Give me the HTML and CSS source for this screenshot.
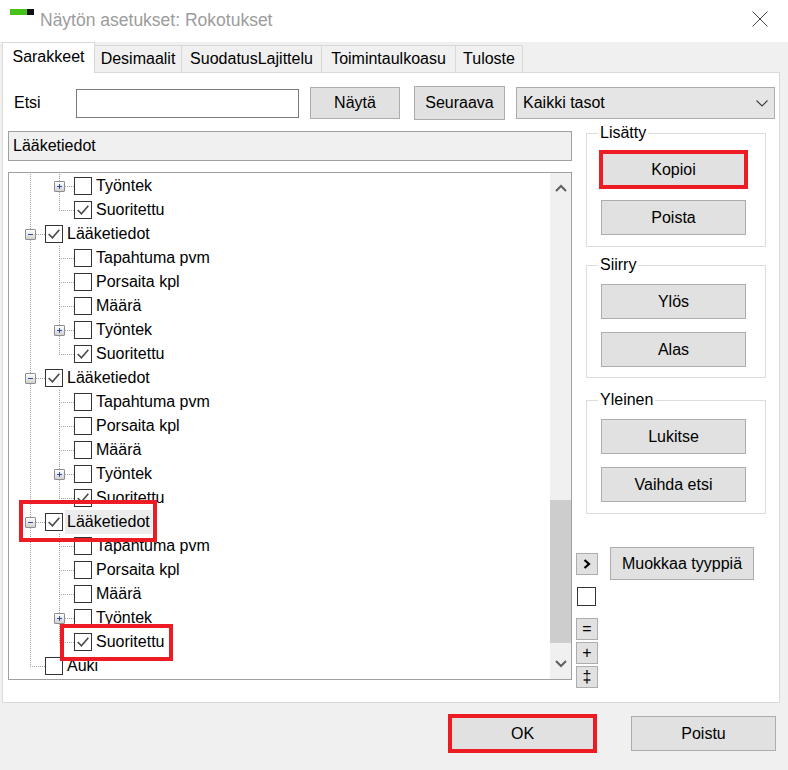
FILE: index.html
```html
<!DOCTYPE html>
<html lang="fi">
<head>
<meta charset="utf-8">
<title>Näytön asetukset: Rokotukset</title>
<link rel="stylesheet" href="styles.css">
</head>
<body>
<div class="window">
  <header class="titlebar">
    <span class="app-icon"><span class="ai-green"></span><span class="ai-black"></span></span>
    <span class="title">Näytön asetukset: Rokotukset</span>
    <svg class="close" viewBox="0 0 16 16"><path d="M0.5 0.5L15.5 15.5M15.5 0.5L0.5 15.5"/></svg>
  </header>

  <nav class="tabs">
    <div class="tab active t1">Sarakkeet</div>
    <div class="tab t2 after-active">Desimaalit</div>
    <div class="tab t3">SuodatusLajittelu</div>
    <div class="tab t4">Toimintaulkoasu</div>
    <div class="tab t5">Tuloste</div>
  </nav>

  <section class="panel">
    <div class="search">
      <span class="lbl-etsi">Etsi</span>
      <div class="textbox"></div>
      <button class="btn btn-nayta">Näytä</button>
      <button class="btn btn-seuraava">Seuraava</button>
      <div class="combo">
        <span>Kaikki tasot</span>
        <svg class="combo-arrow" viewBox="0 0 12 7"><path d="M0.5 0.5L6 6L11.5 0.5"/></svg>
      </div>
    </div>

    <div class="main">
      <div class="left">
        <div class="pathbox">Lääketiedot</div>
        <div class="tree">
          <div class="tree-rows">
            <div class="row"><span class="c0 pipe"></span><span class="c1 tee"><svg class="exp" viewBox="0 0 9 9"><path d="M2 4.5h5M4.5 2v5"/></svg></span><span class="cb"></span><span class="txt">Työntek</span></div>
            <div class="row"><span class="c0 pipe"></span><span class="c1 ell"></span><span class="cb"><svg class="chk" viewBox="0 0 15 15"><path d="M2.5 7.5L6 11L12.5 3.5"/></svg></span><span class="txt">Suoritettu</span></div>
            <div class="row"><span class="c0 tee"><svg class="exp" viewBox="0 0 9 9"><path d="M2 4.5h5"/></svg></span><span class="cb"><svg class="chk" viewBox="0 0 15 15"><path d="M2.5 7.5L6 11L12.5 3.5"/></svg></span><span class="txt">Lääketiedot</span></div>
            <div class="row"><span class="c0 pipe"></span><span class="c1 tee"></span><span class="cb"></span><span class="txt">Tapahtuma pvm</span></div>
            <div class="row"><span class="c0 pipe"></span><span class="c1 tee"></span><span class="cb"></span><span class="txt">Porsaita kpl</span></div>
            <div class="row"><span class="c0 pipe"></span><span class="c1 tee"></span><span class="cb"></span><span class="txt">Määrä</span></div>
            <div class="row"><span class="c0 pipe"></span><span class="c1 tee"><svg class="exp" viewBox="0 0 9 9"><path d="M2 4.5h5M4.5 2v5"/></svg></span><span class="cb"></span><span class="txt">Työntek</span></div>
            <div class="row"><span class="c0 pipe"></span><span class="c1 ell"></span><span class="cb"><svg class="chk" viewBox="0 0 15 15"><path d="M2.5 7.5L6 11L12.5 3.5"/></svg></span><span class="txt">Suoritettu</span></div>
            <div class="row"><span class="c0 tee"><svg class="exp" viewBox="0 0 9 9"><path d="M2 4.5h5"/></svg></span><span class="cb"><svg class="chk" viewBox="0 0 15 15"><path d="M2.5 7.5L6 11L12.5 3.5"/></svg></span><span class="txt">Lääketiedot</span></div>
            <div class="row"><span class="c0 pipe"></span><span class="c1 tee"></span><span class="cb"></span><span class="txt">Tapahtuma pvm</span></div>
            <div class="row"><span class="c0 pipe"></span><span class="c1 tee"></span><span class="cb"></span><span class="txt">Porsaita kpl</span></div>
            <div class="row"><span class="c0 pipe"></span><span class="c1 tee"></span><span class="cb"></span><span class="txt">Määrä</span></div>
            <div class="row"><span class="c0 pipe"></span><span class="c1 tee"><svg class="exp" viewBox="0 0 9 9"><path d="M2 4.5h5M4.5 2v5"/></svg></span><span class="cb"></span><span class="txt">Työntek</span></div>
            <div class="row"><span class="c0 pipe"></span><span class="c1 ell"></span><span class="cb"><svg class="chk" viewBox="0 0 15 15"><path d="M2.5 7.5L6 11L12.5 3.5"/></svg></span><span class="txt">Suoritettu</span></div>
            <div class="row"><span class="c0 tee"><svg class="exp" viewBox="0 0 9 9"><path d="M2 4.5h5"/></svg></span><span class="cb"><svg class="chk" viewBox="0 0 15 15"><path d="M2.5 7.5L6 11L12.5 3.5"/></svg></span><span class="txt sel">Lääketiedot</span></div>
            <div class="row"><span class="c0 pipe"></span><span class="c1 tee"></span><span class="cb"></span><span class="txt">Tapahtuma pvm</span></div>
            <div class="row"><span class="c0 pipe"></span><span class="c1 tee"></span><span class="cb"></span><span class="txt">Porsaita kpl</span></div>
            <div class="row"><span class="c0 pipe"></span><span class="c1 tee"></span><span class="cb"></span><span class="txt">Määrä</span></div>
            <div class="row"><span class="c0 pipe"></span><span class="c1 tee"><svg class="exp" viewBox="0 0 9 9"><path d="M2 4.5h5M4.5 2v5"/></svg></span><span class="cb"></span><span class="txt">Työntek</span></div>
            <div class="row"><span class="c0 pipe"></span><span class="c1 ell"></span><span class="cb"><svg class="chk" viewBox="0 0 15 15"><path d="M2.5 7.5L6 11L12.5 3.5"/></svg></span><span class="txt">Suoritettu</span></div>
            <div class="row"><span class="c0 ell"></span><span class="cb"></span><span class="txt">Auki</span></div>

            <div class="anno anno-node"></div>
            <div class="anno anno-leaf"></div>
          </div>
          <div class="vscroll">
            <div class="sb-btn up"><svg viewBox="0 0 12 8"><path d="M1 7L6 2L11 7"/></svg></div>
            <div class="sb-track"><div class="sb-thumb"></div></div>
            <div class="sb-btn down"><svg viewBox="0 0 12 8"><path d="M1 1L6 6L11 1"/></svg></div>
          </div>
        </div>
      </div>

      <div class="right">
        <fieldset class="group g-lisatty">
          <legend>Lisätty</legend>
          <div class="group-body">
            <button class="btn gbtn marked">Kopioi</button>
            <button class="btn gbtn">Poista</button>
          </div>
        </fieldset>
        <fieldset class="group g-siirry">
          <legend>Siirry</legend>
          <div class="group-body">
            <button class="btn gbtn">Ylös</button>
            <button class="btn gbtn">Alas</button>
          </div>
        </fieldset>
        <fieldset class="group g-yleinen">
          <legend>Yleinen</legend>
          <div class="group-body">
            <button class="btn gbtn">Lukitse</button>
            <button class="btn gbtn">Vaihda etsi</button>
          </div>
        </fieldset>

        <div class="tools-row">
          <button class="btn mini"><svg class="mini-arrow" viewBox="0 0 8 10"><path d="M1.5 1L6 5L1.5 9"/></svg></button>
          <button class="btn btn-muokkaa">Muokkaa tyyppiä</button>
        </div>
        <div class="side-check"></div>
        <div class="mini-col">
          <button class="btn mini">=</button>
          <button class="btn mini">+</button>
          <button class="btn mini">‡</button>
        </div>
      </div>
    </div>
  </section>

  <footer class="footer">
    <button class="btn fbtn marked">OK</button>
    <button class="btn fbtn">Poistu</button>
  </footer>
</div>
</body>
</html>
```

FILE: styles.css
```css
* { box-sizing: border-box; }

html, body {
  margin: 0;
  padding: 0;
}

body {
  width: 788px;
  height: 770px;
  overflow: hidden;
  background: #f0f0f0;
  font-family: "Liberation Sans", Arial, sans-serif;
  font-size: 16px;
  color: #000;
  --vd: repeating-linear-gradient(to bottom, #a0a0a0 0 1px, transparent 1px 2px);
  --hd: repeating-linear-gradient(to right, #a0a0a0 0 1px, transparent 1px 2px);
}

.window {
  width: 788px;
  height: 770px;
  display: flex;
  flex-direction: column;
  background: #f0f0f0;
}

/* ---------- title bar ---------- */
.titlebar {
  height: 42px;
  flex-shrink: 0;
  background: #fff;
  display: flex;
  align-items: flex-start;
}
.app-icon {
  display: flex;
  height: 6px;
  margin: 9px 0 0 10px;
}
.ai-green { width: 17px; background: #46c21b; }
.ai-black { width: 7px; background: #111; }
.title {
  margin: 10px 0 0 6px;
  font-size: 17.5px;
  line-height: 20px;
  color: #9c9c9c;
}
.close {
  width: 16px;
  height: 16px;
  margin: 11px 20px 0 auto;
}
.close path { stroke: #444; stroke-width: 1; fill: none; }

/* ---------- tabs ---------- */
.tabs {
  display: flex;
  align-items: flex-end;
  height: 30px;
  flex-shrink: 0;
  padding-left: 2px;
}
.tab {
  height: 27px;
  border: 1px solid #d9d9d9;
  border-bottom: none;
  border-right: none;
  background: #f0f0f0;
  display: flex;
  align-items: center;
  justify-content: center;
  line-height: 18px;
  white-space: nowrap;
}
.tab:last-child { border-right: 1px solid #d9d9d9; }
.tab.after-active { border-left: none; }
.tab.active {
  height: 31px;
  margin-bottom: -1px;
  padding-bottom: 3px;
  background: #fff;
  border-right: 1px solid #d9d9d9;
  position: relative;
  z-index: 1;
}
.t1 { width: 93px; }
.t2 { width: 86px; }
.t3 { width: 140px; }
.t4 { width: 134px; }
.t5 { width: 68px; }

/* ---------- panel ---------- */
.panel {
  width: 778px;
  height: 631px;
  flex-shrink: 0;
  margin-left: 2px;
  background: #fff;
  border: 1px solid #d9d9d9;
  display: flex;
  flex-direction: column;
}

.btn {
  font: inherit;
  color: #000;
  background: #e1e1e1;
  border: 1px solid #adadad;
  border-radius: 0;
  padding: 0;
  margin: 0;
  display: flex;
  align-items: center;
  justify-content: center;
  line-height: 18px;
  white-space: nowrap;
}
.marked {
  outline: 4px solid #ed1c24;
  outline-offset: -2px;
}

.search {
  display: flex;
  align-items: center;
  height: 34px;
  margin-top: 13px;
}
.lbl-etsi {
  width: 62px;
  margin-left: 11px;
}
.textbox {
  width: 223px;
  height: 29px;
  border: 1px solid #7a7a7a;
  background: #fff;
}
.btn-nayta { width: 90px; height: 32px; margin-left: 11px; }
.btn-seuraava { width: 91px; height: 34px; margin-left: 14px; }
.combo {
  width: 259px;
  height: 32px;
  margin-left: 11px;
  background: #e5e5e5;
  border: 1px solid #acacac;
  display: flex;
  align-items: center;
  padding-left: 6px;
}
.combo-arrow {
  width: 12px;
  height: 7px;
  margin-left: auto;
  margin-right: 6px;
}
.combo-arrow path { stroke: #3c3c3c; stroke-width: 1.1; fill: none; }

.main {
  display: flex;
  flex: 1;
}

/* ---------- left column ---------- */
.left {
  width: 564px;
  margin-left: 5px;
  padding-top: 11px;
  display: flex;
  flex-direction: column;
}
.pathbox {
  height: 30px;
  background: #f0f0f0;
  border: 1px solid #a0a0a0;
  padding-left: 4px;
  display: flex;
  align-items: center;
}
.tree {
  height: 508px;
  margin-top: 11px;
  border: 1px solid #a0a0a0;
  background: #fff;
  display: flex;
}
.tree-rows {
  flex: 1;
  position: relative;
  overflow: hidden;
  padding-top: 1px;
}
.row {
  display: flex;
  align-items: center;
  height: 24px;
  white-space: nowrap;
}
.c0, .c1 {
  height: 24px;
  flex-shrink: 0;
  display: flex;
  align-items: flex-start;
}
.c0 { width: 36px; }
.c1 { width: 29px; }

.c0.pipe { background: var(--vd) 21px 0 / 1px 24px no-repeat; }
.c0.tee  { background: var(--vd) 21px 0 / 1px 24px no-repeat, var(--hd) 21px 12px / 15px 1px no-repeat; }
.c0.ell  { background: var(--vd) 21px 0 / 1px 12px no-repeat, var(--hd) 21px 12px / 15px 1px no-repeat; }
.c1.pipe { background: var(--vd) 14px 0 / 1px 24px no-repeat; }
.c1.tee  { background: var(--vd) 14px 0 / 1px 24px no-repeat, var(--hd) 14px 12px / 15px 1px no-repeat; }
.c1.ell  { background: var(--vd) 14px 0 / 1px 12px no-repeat, var(--hd) 14px 12px / 15px 1px no-repeat; }

.exp {
  display: block;
  width: 11px;
  height: 11px;
  margin-top: 7px;
  border: 1px solid #8e8e8e;
  border-radius: 1px;
  background: linear-gradient(#ffffff, #d0d0d0);
}
.c0 .exp { margin-left: 16px; }
.c1 .exp { margin-left: 9px; }
.exp path { stroke: #2f4f94; stroke-width: 1; fill: none; }

.cb {
  width: 18px;
  height: 18px;
  flex-shrink: 0;
  border: 1.5px solid #333;
  background: #fff;
  margin-right: 4px;
  display: flex;
}
.chk { width: 100%; height: 100%; }
.chk path { stroke: #4a4a4a; stroke-width: 1.5; fill: none; }

.txt { line-height: 24px; }
.txt.sel {
  background: #ececec;
  margin-left: -2px;
  padding: 0 2px;
}

.anno {
  position: absolute;
  border: 4px solid #ed1c24;
}
.anno-node { left: 10px; top: 327px; width: 138px; height: 42px; }
.anno-leaf { left: 51px; top: 451px; width: 113px; height: 37px; }

.vscroll {
  width: 21px;
  flex-shrink: 0;
  background: #f0f0f0;
  display: flex;
  flex-direction: column;
}
.sb-btn {
  height: 29px;
  display: flex;
  align-items: center;
  justify-content: center;
}
.sb-btn.down { height: 30px; }
.sb-btn svg { width: 12px; height: 8px; }
.sb-btn path { stroke: #606060; stroke-width: 2; fill: none; }
.sb-track { flex: 1; }
.sb-thumb {
  height: 143px;
  margin-top: 298px;
  background: #cdcdcd;
}

/* ---------- right column ---------- */
.right {
  margin-left: 4px;
  display: flex;
  flex-direction: column;
  align-items: flex-start;
}
.group {
  width: 180px;
  margin: 0 0 0 10px;
  padding: 0;
  min-inline-size: 0;
  border: 1px solid #dcdcdc;
}
.g-lisatty { margin-top: 4px; }
.g-siirry { margin-top: 9px; }
.g-yleinen { margin-top: 13px; }
.group legend {
  margin-left: 11px;
  padding: 0 2px;
  line-height: 18px;
  font-size: 16px;
}
.group-body {
  display: flex;
  flex-direction: column;
  gap: 13px;
  padding: 10px 19px 11px 14px;
}
.g-siirry .group-body { padding-bottom: 10px; }
.gbtn { width: 145px; height: 35px; }

.tools-row {
  display: flex;
  align-items: center;
  margin-top: 33px;
}
.mini { width: 22px; height: 22px; font-size: 16px; }
.mini-arrow { width: 8px; height: 10px; }
.mini-arrow path { stroke: #000; stroke-width: 2.2; fill: none; }
.btn-muokkaa { width: 144px; height: 33px; margin-left: 12px; }
.side-check {
  width: 19px;
  height: 19px;
  margin: 7px 0 0 1px;
  border: 1.5px solid #333;
  background: #fff;
}
.mini-col {
  display: flex;
  flex-direction: column;
  gap: 2px;
  margin-top: 12px;
}

/* ---------- footer ---------- */
.footer {
  flex: 1;
  display: flex;
  justify-content: flex-end;
  align-items: flex-start;
  gap: 36px;
  padding: 13px 12px 0 0;
}
.fbtn { width: 145px; height: 35px; }
```
